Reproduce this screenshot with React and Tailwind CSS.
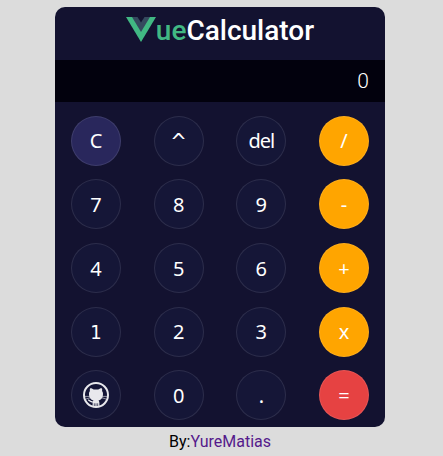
import React from "react";

const base =
  "flex h-[50px] w-[50px] items-center justify-center rounded-full border border-white/10 leading-6 text-white";

const tones = {
  plain: "bg-[#151637]",
  clear: "bg-[#29275c]",
  operator: "bg-[#ffa500]",
  equals: "bg-[#e64242]",
};

const sans = "font-['Noto_Sans',sans-serif] text-[20px]";
const condensed =
  "font-['DejaVu_Sans_Condensed','DejaVu_Sans',sans-serif] [font-stretch:condensed]";
const digit = `${sans} pt-[2px]`;
const overrides = {
  1: `${condensed} text-[20px] pt-px`,
  "^": `${condensed} text-[22px] pt-[2px]`,
  del: `${sans} tracking-[-1px]`,
  "+": digit,
  "=": digit,
  "-": digit,
  ".": digit,
  0: digit,
  4: digit,
  5: digit,
  6: digit,
  7: digit,
  8: digit,
  9: digit,
};

const keys = [
  ["C", "clear"], ["^"], ["del"], ["/", "operator"],
  ["7"], ["8"], ["9"], ["-", "operator"],
  ["4"], ["5"], ["6"], ["+", "operator"],
  ["1"], ["2"], ["3"], ["x", "operator"],
  ["github"], ["0"], ["."], ["=", "equals"],
];

function VueLogo() {
  return (
    <svg className="mt-[10px] h-[25px] w-[30px]" viewBox="0 0 30 25">
      <path d="M0 0H30L15 25Z" fill="#41b883" />
      <path d="M6 0H24L15 15Z" fill="#35495e" />
      <path d="M11.5 0H18.5L15 5.5Z" fill="#131230" />
    </svg>
  );
}

function Octocat() {
  return (
    <svg className="h-[26px] w-[26px]" viewBox="0 0 26 26" fill="none">
      <circle cx="13" cy="13" r="12" stroke="#e8e8ec" strokeWidth="2" />
      <path
        d="M7.2 6.2C8.6 6.1 9.8 6.8 10.6 7.4H15.4C16.2 6.8 17.4 6.1 18.8 6.2C19.3 7.3 19.3 8.2 19 9C20.2 10.4 20.2 12 19.8 14C19.3 16.8 17.6 17.9 15.5 18.4C16.2 19 16.4 20 16.4 21V24.5H9.6V21C9.6 20 9.8 19 10.5 18.4C8.4 17.9 6.7 16.8 6.2 14C5.8 12 5.8 10.4 7 9C6.7 8.2 6.7 7.3 7.2 6.2Z"
        fill="#e8e8ec"
      />
      <path d="M2 14.4H7M19 14.4H24M3 17L7 15.8M19 15.8L23 17" stroke="#e8e8ec" strokeWidth=".6" />
      <path d="M5.2 17.8C6.8 18.5 7.2 20 9.8 20" stroke="#e8e8ec" strokeWidth="1.3" />
      <path d="M11.3 21.3V24M14.7 21.3V24M13 21.3V24" stroke="#161537" strokeWidth=".7" />
    </svg>
  );
}

export default function App() {
  return (
    <main className="flex h-screen flex-col items-center overflow-hidden bg-[#dcdcdc] pr-[3px] pt-[7px] font-[Roboto,sans-serif]">
      <section className="flex h-[420px] w-[330px] flex-col overflow-hidden rounded-[10px] bg-[#131230]">
        <h1 className="flex h-[53px] items-start justify-center text-[28px] font-medium leading-[48px] text-white">
          <VueLogo />
          <span className="text-[#41b883]">ue</span>
          <span>Calculator</span>
        </h1>
        <output className="flex h-[42px] items-center justify-end bg-[#02010d] px-4 pt-px text-[21px] font-light text-white">
          0
        </output>
        <div className="grid flex-1 grid-cols-[repeat(4,50px)] content-between justify-between px-4 pb-[6.8px] pt-[13.7px]">
          {keys.map(([label, tone = "plain"]) => (
            <button
              key={label}
              aria-label={label}
              className={`${base} ${tones[tone]} ${overrides[label] ?? sans}`}
            >
              {label === "github" ? <Octocat /> : label}
            </button>
          ))}
        </div>
      </section>
      <footer className="flex h-[29px] items-center text-[16px] leading-[19px] text-black">
        By:<a className="text-[#551a8b]">YureMatias</a>
      </footer>
    </main>
  );
}
